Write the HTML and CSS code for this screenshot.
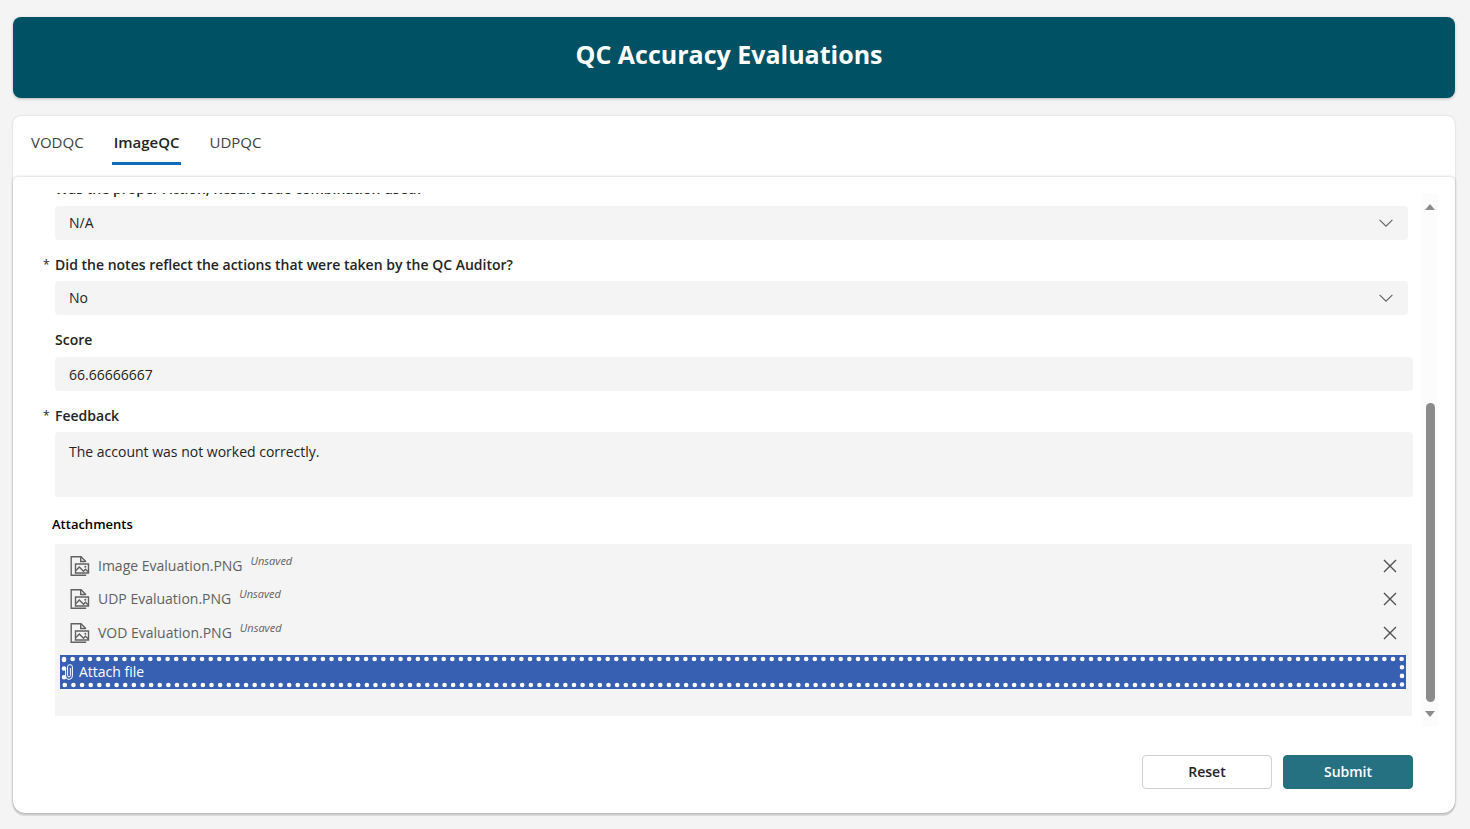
FILE: index.html
```html
<!DOCTYPE html>
<html lang="en">
<head>
<meta charset="utf-8">
<title>QC Accuracy Evaluations</title>
<link rel="stylesheet" href="styles.css">
</head>
<body>
<svg class="defs" aria-hidden="true">
  <symbol id="chevron" viewBox="0 0 14 8"><path d="M.6.8 7 7.2 13.4.8" fill="none" stroke="currentColor" stroke-width="1.1"/></symbol>
  <symbol id="close" viewBox="0 0 14 14"><path d="M1 1l12 12M13 1 1 13" fill="none" stroke="currentColor" stroke-width="1.4"/></symbol>
  <symbol id="picture" viewBox="0 0 20 20"><g fill="none" stroke="currentColor" stroke-width="1.4"><path d="M15.500 6V5.300L11 .8H1.200v18.400h15"/><path d="M10.700.8v4.700h5"/><path d="M5.500 8h13v9h-13z"/><path d="M6 14.500 9.300 11l4.200 4.300 2-2 2.800 2.600"/></g><circle cx="15.300" cy="10.700" r="1" fill="currentColor"/></symbol>
</svg>
<header class="banner"><h1>QC Accuracy Evaluations</h1></header>
<main class="card">
  <nav class="tabs">
    <a href="#vod">VODQC</a>
    <a href="#image" class="active" aria-current="page">ImageQC</a>
    <a href="#udp">UDPQC</a>
  </nav>
  <form class="panel">
    <div class="viewport">
      <div class="fields">
        <label class="label first" for="code">Was the proper Action, Result code combination used?</label>
        <div class="select"><select id="code"><option>N/A</option></select><svg><use href="#chevron"/></svg></div>
        <label class="label required" for="notes">Did the notes reflect the actions that were taken by the QC Auditor?</label>
        <div class="select"><select id="notes"><option>No</option></select><svg><use href="#chevron"/></svg></div>
        <label class="label" for="score">Score</label>
        <input class="input score" id="score" value="66.66666667">
        <label class="label required" for="feedback">Feedback</label>
        <textarea class="input area" id="feedback">The account was not worked correctly.</textarea>
        <h2 class="heading">Attachments</h2>
        <div class="attachments">
          <ul>
            <li><svg class="file"><use href="#picture"/></svg><span>Image Evaluation.PNG</span><em>Unsaved</em><button type="button" aria-label="Remove Image Evaluation.PNG"><svg><use href="#close"/></svg></button></li>
            <li><svg class="file"><use href="#picture"/></svg><span>UDP Evaluation.PNG</span><em>Unsaved</em><button type="button" aria-label="Remove UDP Evaluation.PNG"><svg><use href="#close"/></svg></button></li>
            <li><svg class="file"><use href="#picture"/></svg><span>VOD Evaluation.PNG</span><em>Unsaved</em><button type="button" aria-label="Remove VOD Evaluation.PNG"><svg><use href="#close"/></svg></button></li>
          </ul>
          <button type="button" class="attach">
            <svg class="dots" aria-hidden="true"><rect x="4" y="4"/></svg>
            <svg class="clip" viewBox="0 0 8 16"><path d="M.6 4v8a3.400 3.400 0 0 0 6.800 0V3a2.400 2.400 0 0 0-4.800 0v8.500a1.400 1.400 0 0 0 2.800 0V4" fill="none" stroke="currentColor"/></svg>
            Attach file
          </button>
        </div>
      </div>
      <div class="scrollbar" aria-hidden="true">
        <svg viewBox="0 0 10 6"><path d="M0 6 5 0l5 6z"/></svg>
        <div class="rail"><div class="thumb"></div></div>
        <svg viewBox="0 0 10 6"><path d="M0 0h10L5 6z"/></svg>
      </div>
    </div>
    <footer class="actions">
      <button type="reset" class="button">Reset</button>
      <button type="submit" class="button primary">Submit</button>
    </footer>
  </form>
</main>
</body>
</html>
```
FILE: styles.css
```css
* { box-sizing: border-box; }

body {
  margin: 0;
  height: 100vh;
  padding: 17px 15px 16px 13px;
  display: flex;
  flex-direction: column;
  gap: 18px;
  background: #f4f4f4;
  color: #242424;
  font: 14px/20px "Segoe UI", "Open Sans", "Noto Sans", sans-serif;
}

button, input, select, textarea { font: inherit; color: inherit; }

.defs { display: none; }

.banner {
  height: 81px;
  flex: none;
  padding: 19px 24px 0 14px;
  background: #005163;
  border-radius: 8px;
  box-shadow: 0 1px 3px #00000040;
  color: #fff;
  text-align: center;
}

h1 { margin: 0; font-size: 25px; line-height: 36px; font-weight: 700; }

.card {
  flex: 1;
  min-height: 0;
  display: flex;
  flex-direction: column;
  background: #fff;
  border-radius: 8px 8px 12px 12px;
  box-shadow: 0 0 2px #00000030, 0 3px 1px #0000001c;
}

.tabs { display: flex; gap: 26px; height: 61px; padding: 16px 16px 0; font-size: 15px; }

.tabs a {
  height: 33px;
  padding: 0 2px;
  color: #424242;
  text-decoration: none;
  border-bottom: 3px solid transparent;
}

.tabs a.active { color: #242424; font-weight: 600; border-color: #0f6cbd; }

.panel {
  flex: 1;
  min-height: 0;
  display: flex;
  flex-direction: column;
  padding-top: 16px;
  border-radius: 5px 5px 12px 12px;
  box-shadow: 0 0 3px #00000040;
}

.viewport { flex: 1; min-height: 0; display: flex; gap: 9px; padding-right: 17px; overflow: hidden; }

.fields {
  flex: 1;
  display: flex;
  flex-direction: column;
  justify-content: flex-end;
  padding: 0 0 11px 42px;
  overflow: hidden;
}

.label { flex: none; position: relative; margin: 15px 0 6px; font-weight: 600; }
.label.first { margin-bottom: 7px; }
.required::before { content: "*"; position: absolute; left: -12px; font-size: 12px; font-weight: 400; }

.select { display: grid; align-items: center; flex: none; margin-right: 5px; }
.select > * { grid-area: 1 / 1; }
.select svg { width: 14px; height: 8px; margin-right: 15px; justify-self: end; color: #616161; pointer-events: none; }

select, .input {
  appearance: none;
  width: 100%;
  height: 34px;
  flex: none;
  padding: 0 14px;
  border: 0;
  border-radius: 4px;
  background: #f4f4f4;
}

.score { margin-top: 1px; }
.area { height: 65px; padding: 10px 14px; resize: none; display: block; }

.heading { margin: 17px 0 10px -3px; font-size: 13px; line-height: 20px; font-weight: 600; color: #000; }

.attachments { flex: none; height: 172px; padding: 5px 6px 0 5px; margin-right: 1px; background: #f4f4f4; }

ul { list-style: none; margin: 0; padding: 0 9px 5px 10px; }

li { display: flex; align-items: center; height: 34px; color: #616161; }
li:first-child { height: 33px; }
li .file { width: 20px; height: 20px; margin-right: 8px; }
li em { margin: 0 auto 10px 8px; font-size: 11px; line-height: 16px; }
li button { display: flex; padding: 0; border: 0; background: none; color: #505050; }
li button svg { width: 14px; height: 14px; }

.attach {
  position: relative;
  display: flex;
  align-items: center;
  gap: 6px;
  width: 100%;
  height: 34px;
  padding: 0 5px;
  border: 0;
  background: #3860b2;
  color: #fff;
}

.dots { position: absolute; inset: 0; width: 100%; height: 100%; }

.dots rect {
  width: calc(100% - 8px);
  height: calc(100% - 8px);
  fill: none;
  stroke: #fff;
  stroke-width: 4.6;
  stroke-linecap: round;
  stroke-dasharray: 0 8.63;
}

.clip { width: 8px; height: 16px; }

.scrollbar { width: 16px; padding: 11px 0 10px; display: flex; flex-direction: column; align-items: center; background: #fcfcfc; }
.scrollbar svg { width: 10px; height: 6px; fill: #8b8b8b; }
.rail { flex: 1; width: 9px; display: flex; flex-direction: column; justify-content: flex-end; padding: 9px 0; }
.thumb { height: 62%; border-radius: 5px; background: #8b8b8b; }

.actions { display: flex; justify-content: flex-end; gap: 11px; padding: 28px 42px 24px; }

.button { width: 130px; height: 34px; border: 1px solid #d1d1d1; border-radius: 4px; background: #fff; font-weight: 600; }
.button.primary { border-color: #257181; background: #257181; color: #fff; }
```
